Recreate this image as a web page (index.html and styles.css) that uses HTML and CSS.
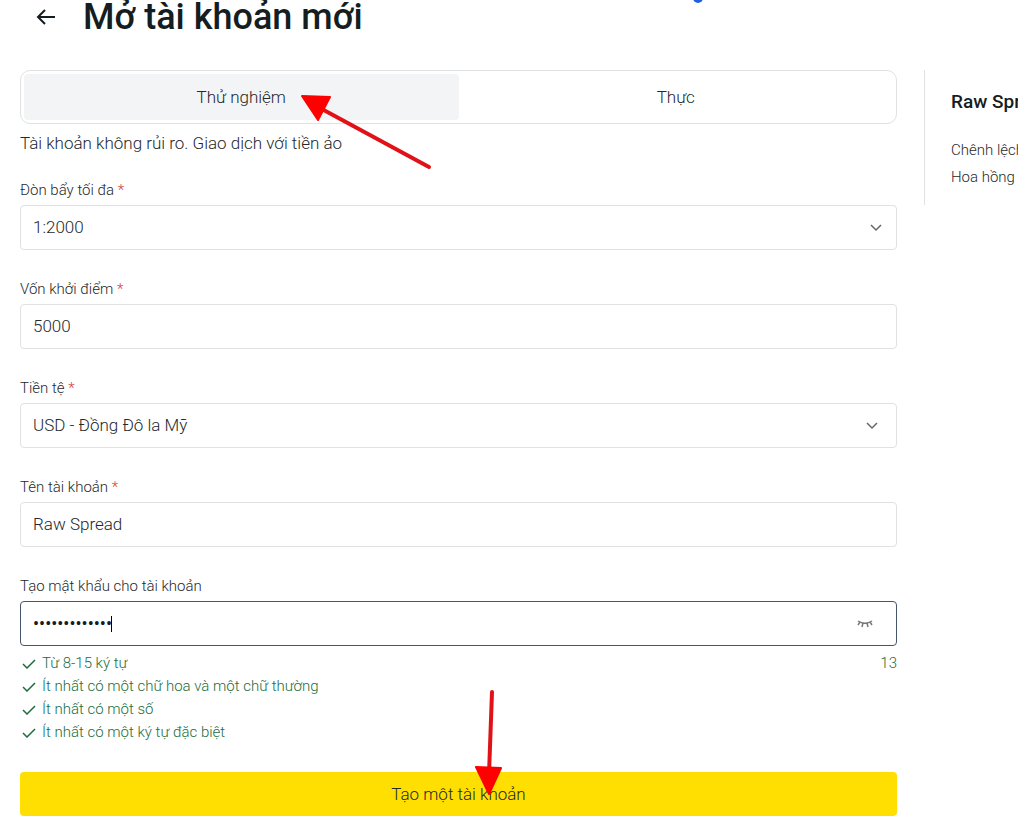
FILE: index.html
```
<!DOCTYPE html>
<html lang="vi">
<head>
    <meta charset="UTF-8">
    <meta name="viewport" content="width=device-width, initial-scale=1.0">
    <title>Mở tài khoản mới</title>
    <link rel="stylesheet" href="styles.css">
</head>
<body>
    <header class="page-header">
        <button type="button" class="back" aria-label="Quay lại">
            <svg width="20" height="18" viewBox="0 0 20 18"><path d="M19 9H2M9 2L2 9l7 7"/></svg>
        </button>
        <h1>Mở tài khoản mới</h1>
        <span class="dot"></span>
    </header>

    <div class="layout">
        <form class="account-form">
            <div class="tabs">
                <button type="button" class="tab active">Thử nghiệm</button>
                <button type="button" class="tab">Thực</button>
            </div>
            <p class="description">Tài khoản không rủi ro. Giao dịch với tiền ảo</p>

            <div class="field">
                <label for="leverage">Đòn bẩy tối đa <span class="required">*</span></label>
                <div class="control">
                    <select id="leverage">
                        <option>1:2000</option>
                    </select>
                    <svg class="chevron" width="12" height="8" viewBox="0 0 12 8"><path d="M1 1l5 5 5-5"/></svg>
                </div>
            </div>

            <div class="field">
                <label for="balance">Vốn khởi điểm <span class="required">*</span></label>
                <div class="control">
                    <input type="text" id="balance" value="5000">
                </div>
            </div>

            <div class="field">
                <label for="currency">Tiền tệ <span class="required">*</span></label>
                <div class="control">
                    <select id="currency">
                        <option>USD - Đồng Đô la Mỹ</option>
                    </select>
                    <svg class="chevron inset" width="12" height="8" viewBox="0 0 12 8"><path d="M1 1l5 5 5-5"/></svg>
                </div>
            </div>

            <div class="field">
                <label for="nickname">Tên tài khoản <span class="required">*</span></label>
                <div class="control">
                    <input type="text" id="nickname" value="Raw Spread">
                </div>
            </div>

            <div class="field password">
                <label for="password">Tạo mật khẩu cho tài khoản</label>
                <div class="control">
                    <input type="password" id="password" value="RawSpread#123">
                    <span class="caret"></span>
                    <button type="button" class="toggle" aria-label="Hiện mật khẩu">
                        <svg width="16" height="8" viewBox="0 0 16 8"><path d="M1 1c4 3 10 3 14 0M3 2L1 5M6 3L5 7M10 3l1 4M13 2l2 3"/></svg>
                    </button>
                </div>
            </div>

            <div class="rules">
                <ul>
                    <li><svg width="14" height="10" viewBox="0 0 14 10"><path d="M1 5l4 4 8-8"/></svg>Từ 8-15 ký tự</li>
                    <li><svg width="14" height="10" viewBox="0 0 14 10"><path d="M1 5l4 4 8-8"/></svg>Ít nhất có một chữ hoa và một chữ thường</li>
                    <li><svg width="14" height="10" viewBox="0 0 14 10"><path d="M1 5l4 4 8-8"/></svg>Ít nhất có một số</li>
                    <li><svg width="14" height="10" viewBox="0 0 14 10"><path d="M1 5l4 4 8-8"/></svg>Ít nhất có một ký tự đặc biệt</li>
                </ul>
                <span>13</span>
            </div>

            <button type="submit" class="submit">Tạo một tài khoản</button>
        </form>

        <aside class="summary">
            <h2>Raw Spread</h2>
            <p>Chênh lệch</p>
            <p>Hoa hồng</p>
        </aside>
    </div>

    <!-- chỉ dẫn -->
    <svg class="arrow arrow-tab" width="132" height="76" viewBox="0 0 132 76">
        <path class="shaft" d="M20 14L129 73"/>
        <path class="head" d="M2 2l28 1-12 23z"/>
    </svg>
    <svg class="arrow arrow-submit" width="28" height="108" viewBox="0 0 28 108">
        <path class="shaft" d="M17 3l-3 82"/>
        <path class="head" d="M1 78l25 1-12 26z"/>
    </svg>
</body>
</html>
```
FILE: styles.css
```
* {
    box-sizing: border-box;
}

body {
    position: relative;
    margin: 0;
    overflow-x: hidden;
    background: #fff;
    color: #25292d;
    font-family: Roboto, "Liberation Sans", sans-serif;
    font-size: 17px;
    font-weight: 300;
    line-height: 20px;
}

button,
input,
select {
    font: inherit;
    color: inherit;
}

button {
    padding: 0;
    border: 0;
    background: none;
    cursor: pointer;
}

svg {
    fill: none;
    stroke: currentColor;
}

h1,
h2,
p,
ul {
    margin: 0;
    padding: 0;
}

.page-header {
    position: relative;
    display: flex;
    align-items: center;
    gap: 27px;
    height: 34px;
    margin-bottom: 36px;
    padding-left: 36px;
    color: #141d22;
}

.page-header h1 {
    font-size: 36px;
    line-height: 34px;
    font-weight: 500;
}

.back {
    display: flex;
}

.back svg {
    stroke-width: 2;
}

.dot {
    position: absolute;
    top: -7px;
    left: 693px;
    width: 10px;
    height: 10px;
    border-radius: 50%;
    background: #1f5fe0;
}

.layout {
    display: grid;
    grid-template-columns: minmax(0, 1fr) 94px;
    gap: 27px;
    align-items: start;
    padding-left: 20px;
}

.tabs {
    display: flex;
    padding: 3px;
    border: 1px solid #dfe1e3;
    border-radius: 10px;
}

.tab {
    flex: 1;
    height: 46px;
    border-radius: 4px;
}

.tab.active {
    background: #f3f4f6;
}

.description {
    margin: 9px 0 27px;
}

.field {
    margin-bottom: 29px;
}

.field label {
    display: block;
    margin-bottom: 5px;
    font-size: 15px;
}

.required {
    color: #d03a3a;
}

.control {
    position: relative;
    display: flex;
    align-items: center;
    height: 45px;
    border: 1px solid #dfe1e3;
    border-radius: 4px;
}

.control input,
.control select {
    width: 100%;
    height: 100%;
    padding: 0 12px 2px;
    border: 0;
    outline: 0;
    background: transparent;
    appearance: none;
}

.chevron {
    position: absolute;
    right: 14px;
    color: #66696c;
    stroke-width: 1.5;
    pointer-events: none;
}

.chevron.inset {
    right: 18px;
}

.field.password {
    margin-bottom: 6px;
}

.password .control {
    border-color: #46566a;
}

.password .control input {
    padding-bottom: 0;
    color: #141d22;
    font-size: 18px;
    font-weight: 400;
}

.caret {
    position: absolute;
    left: 90px;
    width: 1px;
    height: 16px;
    background: #000;
}

.toggle {
    position: absolute;
    right: 23px;
    display: flex;
    color: #77797c;
}

.toggle svg {
    stroke-width: 1.5;
}

.rules {
    display: flex;
    justify-content: space-between;
    margin-bottom: 28px;
    color: #1b6e3c;
    font-size: 15px;
    line-height: 23px;
}

.rules ul {
    list-style: none;
}

.rules li {
    display: flex;
    align-items: center;
    gap: 6px;
    padding-left: 2px;
}

.rules svg {
    stroke-width: 1.5;
}

.submit {
    display: block;
    width: 100%;
    height: 44px;
    border-radius: 4px;
    background: #ffde02;
}

.summary {
    padding: 22px 0 18px 26px;
    border-left: 1px solid #dfe1e3;
    overflow: hidden;
    white-space: nowrap;
    font-size: 15px;
}

.summary h2 {
    margin-bottom: 28px;
    color: #141d22;
    font-size: 19px;
    line-height: 20px;
    font-weight: 500;
}

.summary p + p {
    margin-top: 7px;
}

.arrow {
    position: absolute;
    pointer-events: none;
}

.arrow-tab {
    top: 94px;
    left: 300px;
}

.arrow-submit {
    top: 689px;
    left: 475px;
}

.shaft {
    stroke: #e01218;
    stroke-width: 4;
    stroke-linecap: round;
}

.head {
    fill: #f00;
    stroke: #f00;
    stroke-width: 2;
    stroke-linejoin: round;
}
```
